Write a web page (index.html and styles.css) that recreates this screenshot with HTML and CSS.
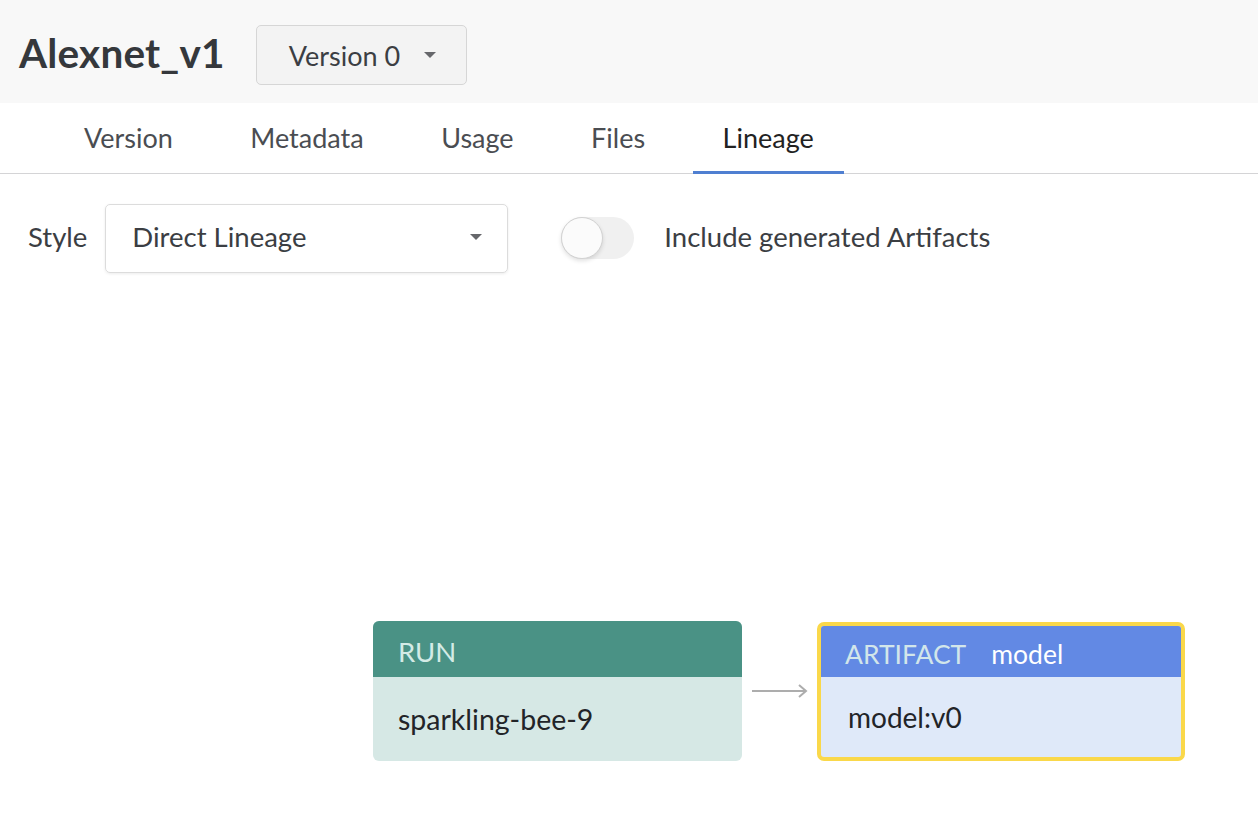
FILE: index.html
```html
<!DOCTYPE html>
<html>
<head>
<meta charset="utf-8">
<link rel="stylesheet" href="styles.css">
</head>
<body>
<header class="top">
  <h1 class="title">Alexnet_v1</h1>
  <button class="version-btn">Version 0<span class="caret"></span></button>
</header>
<nav class="tabs">
  <div class="tab">Version</div>
  <div class="tab">Metadata</div>
  <div class="tab">Usage</div>
  <div class="tab">Files</div>
  <div class="tab active">Lineage</div>
</nav>
<section class="controls">
  <span class="label">Style</span>
  <div class="select">Direct Lineage<span class="caret"></span></div>
  <div class="toggle"><span class="knob"></span></div>
  <span class="toggle-label">Include generated Artifacts</span>
</section>
<section class="canvas">
  <div class="node run">
    <div class="node-head">RUN</div>
    <div class="node-body">sparkling-bee-9</div>
  </div>
  <svg class="edge" width="60" height="14" viewBox="0 0 60 14">
    <path d="M0 7 H54 M47 1 L54 7 L47 13" fill="none" stroke="#adadad" stroke-width="2"/>
  </svg>
  <div class="node artifact">
    <div class="node-head"><span class="kind">ARTIFACT</span><span class="name">model</span></div>
    <div class="node-body">model:v0</div>
  </div>
</section>
</body>
</html>
```
FILE: styles.css
```css
* { box-sizing: border-box; }
html, body { margin: 0; padding: 0; background: #fff; }
body {
  font-family: "Source Sans Pro", Lato, "Noto Sans", sans-serif;
  color: #3b3e43;
  width: 1258px;
  height: 820px;
  overflow: hidden;
}
.top {
  background: #f8f8f8;
  height: 103px;
  display: flex;
  align-items: center;
  padding: 0 19px;
  gap: 31px;
}
.title {
  margin: 0;
  font-size: 40.5px;
  font-weight: 700;
  color: #35383c;
  letter-spacing: 0.2px;
  position: relative;
  top: 1px;
}
.version-btn {
  font-family: inherit;
  width: 211px;
  height: 60px;
  margin-top: 7px;
  border: 1px solid #d6d6d6;
  border-radius: 5px;
  background: #f3f3f3;
  font-size: 27px;
  color: #3b3e43;
  display: flex;
  align-items: center;
  padding: 0 0 0 32px;
}
.version-btn .caret { margin-left: 24px; }
.caret {
  display: inline-block;
  width: 0; height: 0;
  border-left: 6.5px solid transparent;
  border-right: 6.5px solid transparent;
  border-top: 6.5px solid #66676b;
}
.tabs {
  display: flex;
  height: 71px;
  padding-left: 54px;
  gap: 17.5px;
  border-bottom: 1px solid #d4d4d6;
}
.tab {
  padding: 0 30px;
  display: flex;
  align-items: center;
  font-size: 27px;
  color: #4a4d52;
  border-bottom: 3px solid transparent;
  margin-bottom: -1px;
}
.tab.active {
  color: #222;
  border-bottom-color: #4f7fd1;
}
.controls {
  display: flex;
  align-items: center;
  padding: 29px 0 0 28px;
  height: 99px;
}
.controls > span { position: relative; top: -2px; }
.label {
  font-size: 27.5px;
  color: #3b3e43;
  margin-right: 18px;
}
.select {
  width: 403px;
  height: 69px;
  border: 1px solid #dcdcdc;
  border-radius: 5px;
  box-shadow: 0 1px 3px rgba(0,0,0,0.08);
  display: flex;
  align-items: center;
  justify-content: space-between;
  padding: 0 25px 3px 26px;
  font-size: 27.5px;
  color: #3b3e43;
}
.toggle {
  margin-left: 53px;
  width: 73px;
  height: 42px;
  border-radius: 21px;
  background: #f0f0f0;
  position: relative;
}
.knob {
  position: absolute;
  left: 0; top: 0;
  width: 42px; height: 42px;
  border-radius: 50%;
  background: #fbfbfb;
  border: 1px solid #d2d2d2;
  box-shadow: 0 2px 4px rgba(0,0,0,0.12);
}
.toggle-label {
  margin-left: 30px;
  font-size: 27.5px;
  color: #3b3e43;
}
.canvas {
  position: relative;
  height: 547px;
}
.node {
  position: absolute;
  display: flex;
  flex-direction: column;
  overflow: hidden;
  font-size: 27.5px;
}
.node-head {
  display: flex;
  align-items: center;
  gap: 25px;
}
.node-body {
  flex: 1;
  display: flex;
  align-items: center;
  color: #222428;
}
.run {
  left: 373px;
  top: 348px;
  width: 369px;
  height: 140px;
  border-radius: 6px;
  background: #d6e8e5;
}
.run .node-head {
  height: 56px;
  background: #4a9285;
  color: #d4ebe6;
  padding: 0 25px;
  padding-top: 4px;
}
.run .node-body { padding: 0 25px; font-size: 28.5px; }
.artifact {
  left: 817px;
  top: 349px;
  width: 368px;
  height: 139px;
  border: 4px solid #fad84a;
  border-radius: 7px;
  background: #dfe9f9;
}
.artifact .node-head {
  height: 51px;
  background: #6289e4;
  padding: 4px 0 0 24px;
  font-size: 26.5px;
}
.artifact .kind { color: #d2e6ea; }
.artifact .name { color: #fff; }
.artifact .node-body { padding: 0 27px; font-size: 28px; }
.edge {
  position: absolute;
  left: 752px;
  top: 411px;
}
```
